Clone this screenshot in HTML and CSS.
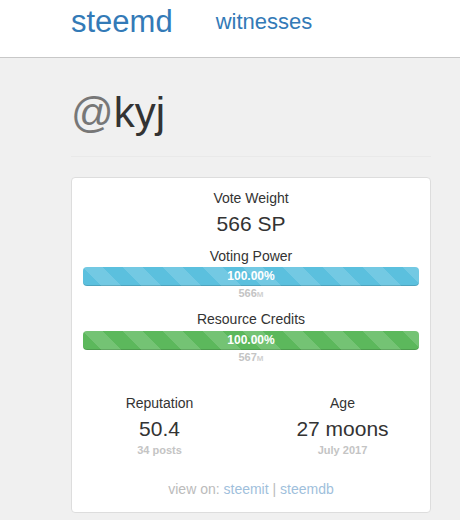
FILE: index.html
```html
<!DOCTYPE html>
<html>
<head>
<meta charset="utf-8">
<link rel="stylesheet" href="styles.css">
</head>
<body>
<header class="navbar">
  <a class="brand" href="#">steemd</a>
  <a class="nav-link" href="#">witnesses</a>
</header>
<main class="container">
  <h1 class="account"><span class="at">@</span>kyj</h1>
  <hr class="rule">
  <section class="card">
    <div class="label">Vote Weight</div>
    <div class="value">566 SP</div>

    <div class="label gap">Voting Power</div>
    <div class="bar bar-info">100.00%</div>
    <div class="sub">566<small>M</small></div>

    <div class="label gap2">Resource Credits</div>
    <div class="bar bar-success bar-rc">100.00%</div>
    <div class="sub">567<small>M</small></div>

    <div class="stats">
      <div class="stat">
        <div class="label">Reputation</div>
        <div class="value">50.4</div>
        <div class="sub sub-gap">34 posts</div>
      </div>
      <div class="stat">
        <div class="label">Age</div>
        <div class="value">27 moons</div>
        <div class="sub sub-gap">July 2017</div>
      </div>
    </div>

    <div class="viewon">view on: <a href="#">steemit</a> | <a href="#">steemdb</a></div>
  </section>
</main>
</body>
</html>
```
FILE: styles.css
```css
html, body {
  margin: 0;
  padding: 0;
}
body {
  background: #f0f0f0;
  font-family: "Liberation Sans", Arial, Helvetica, sans-serif;
  color: #333;
  font-size: 14px;
  line-height: 20px;
}
a {
  text-decoration: none;
}
.navbar {
  height: 57px;
  background: #fff;
  border-bottom: 1px solid #c8c8c8;
  display: flex;
  align-items: flex-start;
  padding-left: 71px;
  box-sizing: content-box;
}
.brand {
  color: #337ab7;
  font-size: 31px;
  line-height: 36px;
  margin-top: 4px;
}
.nav-link {
  color: #337ab7;
  font-size: 22px;
  line-height: 26px;
  margin-top: 9px;
  margin-left: 43px;
}
.container {
  margin-left: 71px;
  width: 360px;
}
.account {
  margin: 32px 0 0 0;
  font-size: 42px;
  line-height: 46px;
  font-weight: normal;
  color: #333;
}
.at {
  color: #777;
}
.rule {
  margin: 20px 0 20px 0;
  border: 0;
  border-top: 1px solid #e9e9e9;
  height: 0;
}
.card {
  background: #fff;
  border: 1px solid #ddd;
  border-radius: 4px;
  padding: 10px 11px 13px 11px;
  text-align: center;
  box-sizing: border-box;
  width: 360px;
}
.label {
  font-size: 14px;
  line-height: 20px;
  color: #333;
}
.gap {
  margin-top: 10px;
}
.gap2 {
  margin-top: 7px;
}
.value {
  margin-top: 4px;
  font-size: 21px;
  line-height: 24px;
  color: #333;
}
.bar {
  margin-top: 1px;
  height: 19px;
  border-radius: 4px;
  color: #fff;
  font-size: 12px;
  font-weight: bold;
  line-height: 19px;
  box-shadow: inset 0 -1px 0 rgba(0, 0, 0, 0.15);
  background-image: linear-gradient(45deg, rgba(255,255,255,.15) 25%, transparent 25%, transparent 50%, rgba(255,255,255,.15) 50%, rgba(255,255,255,.15) 75%, transparent 75%, transparent);
  background-size: 40px 40px;
}
.bar-rc {
  margin-top: 2px;
}
.bar-info {
  background-color: #5bc0de;
}
.bar-success {
  background-color: #5cb85c;
}
.sub {
  font-size: 11px;
  line-height: 14px;
  font-weight: bold;
  color: #c4c4c4;
}
.sub small {
  font-size: 8px;
  color: #d0d0d0;
}
.sub-gap {
  margin-top: 2px;
}
.stats {
  display: grid;
  grid-template-columns: 1fr 1fr;
  margin: 27px -15px 0 -15px;
}
.viewon {
  margin-top: 22px;
  color: #bbb;
  font-size: 14px;
  line-height: 20px;
}
.viewon a {
  color: #9fbfdc;
}
```
